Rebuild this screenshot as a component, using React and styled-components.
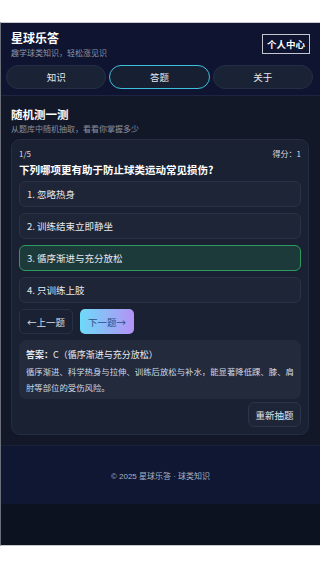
import React from "react";
import styled, { createGlobalStyle } from "styled-components";

const Global = createGlobalStyle`
  html, body { margin: 0; padding: 0; background: #ffffff; }
  body { font-family: "Noto Sans CJK SC", "Noto Sans", sans-serif; }
  * { box-sizing: border-box; }
`;

const Page = styled.div`
  width: 320px;
  height: 568px;
  padding-top: 22px;
  background: #ffffff;
`;

const Screen = styled.div`
  height: 524px;
  border-top: 1px solid #c6c9cf;
  border-bottom: 1px solid #c6c9cf;
  border-left: 1px solid #6a6f7a;
  background: #0d1220;
  display: flex;
  flex-direction: column;
  color: #e8ebf1;
  overflow: hidden;
`;

const Header = styled.header`
  background: #0f1530;
  border-bottom: 1px solid #1e2540;
  padding: 7px 7px 6px 5px;
`;

const HeaderTop = styled.div`
  display: flex;
  justify-content: space-between;
  align-items: flex-start;
  padding-left: 5px;
  padding-right: 3px;
`;

const Brand = styled.div`
  display: flex;
  flex-direction: column;
`;

const Title = styled.div`
  font-size: 12px;
  font-weight: 700;
  line-height: 15px;
  color: #ffffff;
`;

const Sub = styled.div`
  font-size: 8px;
  line-height: 11px;
  color: #8c93a6;
  margin-top: 2px;
`;

const ProfileBtn = styled.button`
  margin-top: 4px;
  height: 20px;
  padding: 0 4px;
  background: transparent;
  border: 1px solid #c3c7d0;
  color: #ffffff;
  font-family: inherit;
  font-size: 9.5px;
  font-weight: 700;
  line-height: 18px;
`;

const Tabs = styled.nav`
  display: grid;
  grid-template-columns: repeat(3, 1fr);
  gap: 3px;
  margin-top: 7px;
`;

const Tab = styled.button`
  height: 24px;
  border-radius: 12px;
  border: ${(p) => (p.$active ? "1.5px solid #3cc0dc" : "1px solid #262e44")};
  background: ${(p) => (p.$active ? "#171f33" : "#1a2236")};
  color: #e6e9ef;
  font-family: inherit;
  font-size: 9.5px;
  padding: 0;
`;

const Main = styled.main`
  padding: 11px 11px 10px 10px;
  background: #121828;
`;

const SectionTitle = styled.h2`
  margin: 0;
  font-size: 11.5px;
  line-height: 15px;
  font-weight: 700;
  color: #ffffff;
`;

const SectionSub = styled.div`
  font-size: 8px;
  line-height: 11px;
  color: #8890a2;
  margin-top: 1px;
`;

const Card = styled.section`
  margin-top: 5px;
  background: #1a2132;
  border: 1px solid #262e42;
  border-radius: 9px;
  padding: 8px 7px 7px 7px;
`;

const Meta = styled.div`
  display: flex;
  justify-content: space-between;
  font-size: 8px;
  line-height: 11px;
  color: #d5d9e2;
`;

const Question = styled.div`
  margin-top: 4px;
  font-size: 10.5px;
  line-height: 14px;
  font-weight: 700;
  color: #ffffff;
`;

const Options = styled.div`
  display: flex;
  flex-direction: column;
  gap: 6px;
  margin-top: 4px;
`;

const Option = styled.div`
  height: 26px;
  display: flex;
  align-items: center;
  padding-left: 7px;
  border-radius: 6px;
  border: 1px solid ${(p) => (p.$selected ? "#2f9a5f" : "#2a3246")};
  background: ${(p) => (p.$selected ? "#1d3a3a" : "#1e2536")};
  font-size: 9.5px;
  color: #e6e9ef;
`;

const NavRow = styled.div`
  display: flex;
  gap: 7px;
  margin-top: 6px;
`;

const NavBtn = styled.button`
  width: 54px;
  height: 25px;
  border-radius: 5px;
  padding: 0;
  font-family: inherit;
  font-size: 9.5px;
  border: ${(p) => (p.$primary ? "none" : "1px solid #283044")};
  background: ${(p) =>
    p.$primary ? "linear-gradient(90deg, #6ddaf8 0%, #b492f6 100%)" : "#1a2132"};
  color: ${(p) => (p.$primary ? "#2d4f87" : "#d8dce5")};
`;

const Answer = styled.div`
  margin-top: 6px;
  background: #222a3c;
  border-radius: 7px;
  padding: 8px 7px 4px 7px;
`;

const AnswerHead = styled.div`
  font-size: 9px;
  line-height: 13px;
  color: #e8ebf1;
  b { font-weight: 700; }
`;

const Explain = styled.div`
  margin-top: 2px;
  font-size: 8.4px;
  line-height: 16px;
  color: #d3d8e1;
`;

const ActionRow = styled.div`
  display: flex;
  justify-content: flex-end;
  margin-top: 3px;
`;

const GhostBtn = styled.button`
  width: 53px;
  height: 25px;
  border-radius: 6px;
  border: 1px solid #2c3549;
  background: #1e2536;
  color: #e0e4eb;
  font-family: inherit;
  font-size: 9.5px;
  padding: 0;
`;

const Footer = styled.footer`
  height: 59px;
  background: #0f1733;
  border-top: 1px solid #18203a;
  display: flex;
  align-items: center;
  justify-content: center;
  font-family: "Liberation Sans", "Noto Sans CJK SC", sans-serif;
  font-size: 8px;
  color: #a9b1c2;
`;

const options = ["1. 忽略热身", "2. 训练结束立即静坐", "3. 循序渐进与充分放松", "4. 只训练上肢"];

export default function App() {
  return (
    <Page>
      <Global />
      <Screen>
        <Header>
          <HeaderTop>
            <Brand>
              <Title>星球乐答</Title>
              <Sub>趣学球类知识，轻松涨见识</Sub>
            </Brand>
            <ProfileBtn>个人中心</ProfileBtn>
          </HeaderTop>
          <Tabs>
            <Tab>知识</Tab>
            <Tab $active>答题</Tab>
            <Tab>关于</Tab>
          </Tabs>
        </Header>
        <Main>
          <SectionTitle>随机测一测</SectionTitle>
          <SectionSub>从题库中随机抽取，看看你掌握多少</SectionSub>
          <Card>
            <Meta>
              <span>1/5</span>
              <span>得分：1</span>
            </Meta>
            <Question>下列哪项更有助于防止球类运动常见损伤?</Question>
            <Options>
              {options.map((o, i) => (
                <Option key={o} $selected={i === 2}>{o}</Option>
              ))}
            </Options>
            <NavRow>
              <NavBtn>←上一题</NavBtn>
              <NavBtn $primary>下一题→</NavBtn>
            </NavRow>
            <Answer>
              <AnswerHead><b>答案：</b>C（循序渐进与充分放松）</AnswerHead>
              <Explain>循序渐进、科学热身与拉伸、训练后放松与补水，能显著降低踝、膝、肩肘等部位的受伤风险。</Explain>
            </Answer>
            <ActionRow>
              <GhostBtn>重新抽题</GhostBtn>
            </ActionRow>
          </Card>
        </Main>
        <Footer>© 2025 星球乐答 · 球类知识</Footer>
      </Screen>
    </Page>
  );
}
